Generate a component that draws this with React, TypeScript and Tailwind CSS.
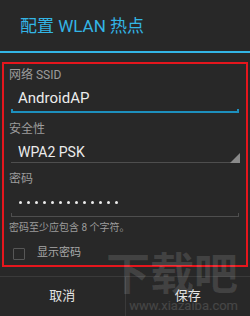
const font = { fontFamily: 'Roboto, "Noto Sans CJK SC", sans-serif' };

const Underline = ({ color }: { color: string }) => (
  <div className="flex items-end h-[4px] mx-[4px]">
    <div className={`w-[1px] h-[4px] ${color}`}></div>
    <div className={`flex-1 h-[1px] ${color}`}></div>
    <div className={`w-[1px] h-[4px] ${color}`}></div>
  </div>
);

export default function App() {
  const dots = Array.from({ length: 13 });
  return (
    <div
      className="relative w-[250px] h-[316px] bg-[#282828] overflow-hidden flex flex-col"
      style={font}
    >
      {/* title */}
      <div className="h-[51px] flex items-center pl-[20px] pt-[2px] text-[#33b5e5] text-[17px]">
        配置 WLAN 热点
      </div>
      <div className="h-[2px] bg-[#33b5e5]"></div>

      {/* form, red highlight box */}
      <div className="px-[2px] pt-[9px]">
        <div className="h-[205px] border-2 border-[#e5161d] px-[3px] pt-[3px]">
          <div className="text-[12px] leading-[16px] text-[#9c9c9c] pl-[2px]">网络 SSID</div>
          <div className="text-[15px] leading-[20px] text-[#ececec] pl-[11px] mt-[5px]">AndroidAP</div>
          <div className="mt-[1px]">
            <div className="flex items-end h-[4px] mx-[4px]">
              <div className="w-[2px] h-[4px] bg-[#1d8fbd]"></div>
              <div className="flex-1 h-[2px] bg-[#1d8fbd]"></div>
              <div className="w-[2px] h-[4px] bg-[#1d8fbd]"></div>
            </div>
          </div>

          <div className="text-[12px] leading-[16px] text-[#9c9c9c] pl-[2px] mt-[8px]">安全性</div>
          <div className="text-[14px] leading-[20px] text-[#ececec] pl-[11px] mt-[5px]">WPA2 PSK</div>
          <div className="relative mx-[4px] mt-[-1px] h-[2px]">
            <div className="h-[1px] bg-[#4e4e4e] mt-[1px]"></div>
            <svg
              className="absolute right-[-1px] bottom-[1px]"
              width="10"
              height="10"
              viewBox="0 0 10 10"
            >
              <polygon points="10,0 10,10 0,10" fill="#8a8a8a" />
            </svg>
          </div>

          <div className="text-[12px] leading-[16px] text-[#9c9c9c] pl-[2px] mt-[7px]">密码</div>
          <div className="flex items-center gap-[5px] pl-[12px] h-[20px] mt-[5px]">
            {dots.map((_, i) => (
              <div key={i} className="w-[3px] h-[3px] rounded-full bg-[#ececec]"></div>
            ))}
          </div>
          <div className="mt-[1px]">
            <Underline color="bg-[#4e4e4e]" />
          </div>

          <div className="text-[10px] leading-[14px] text-[#9c9c9c] pl-[2px] mt-[4px]">
            密码至少应包含 8 个字符。
          </div>

          <div className="flex items-center mt-[12px] pl-[6px] h-[13px]">
            <div className="w-[12px] h-[12px] border border-[#575757] rounded-[1px]"></div>
            <div className="text-[11px] text-[#a8a8a8] ml-[12px]">显示密码</div>
          </div>
        </div>
      </div>

      {/* buttons */}
      <div className="mt-[9px] border-t border-[#3a3a3a] flex flex-1">
        <div className="flex-1 flex items-center justify-center text-[13px] text-[#e4e4e4] pb-[2px]">
          取消
        </div>
        <div className="w-[1px] bg-[#3a3a3a]"></div>
        <div className="flex-1 flex items-center justify-center text-[13px] text-[#e4e4e4] pb-[2px]">
          保存
        </div>
      </div>

      {/* watermark */}
      <div className="absolute left-[106px] top-[252px] pointer-events-none flex flex-col items-end">
        <div className="text-[44px] leading-[46px] font-bold text-white/[0.12]">下载吧</div>
        <div className="text-[13px] leading-[16px] text-white/[0.14]">www.xiazaiba.com</div>
      </div>
    </div>
  );
}
